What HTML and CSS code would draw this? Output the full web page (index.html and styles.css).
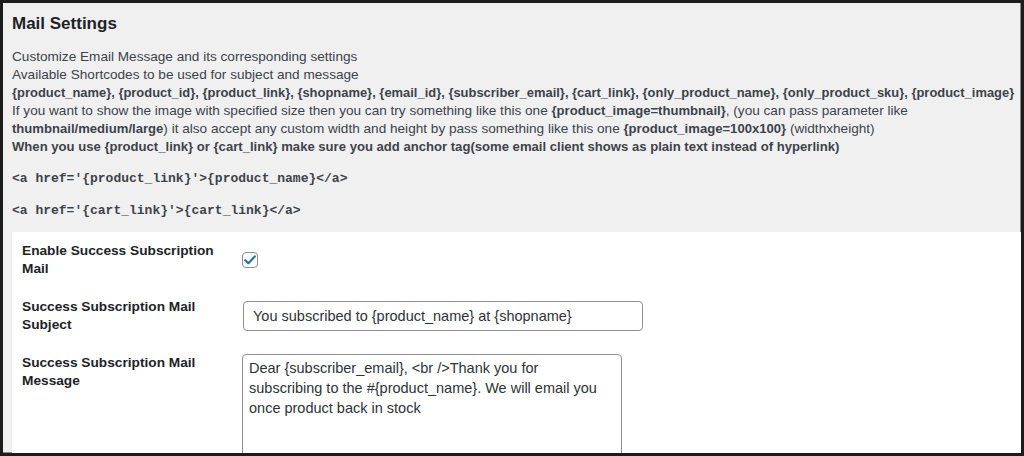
FILE: index.html
```html
<!DOCTYPE html>
<html>
<head>
<meta charset="utf-8">
<title>Mail Settings</title>
<link rel="stylesheet" href="styles.css">
</head>
<body>
<div class="frame">
  <h2 class="title">Mail Settings</h2>
  <p class="desc">
    Customize Email Message and its corresponding settings<br>
    Available Shortcodes to be used for subject and message<br>
    <span class="nowrap"><strong class="codes">{product_name}, {product_id}, {product_link}, {shopname}, {email_id}, {subscriber_email}, {cart_link}, {only_product_name}, {only_product_sku}, {product_image}</strong></span><br>
    If you want to show the image with specified size then you can try something like this one <strong>{product_image=thumbnail}</strong>, (you can pass parameter like<br>
    <strong>thumbnail/medium/large</strong>) it also accept any custom width and height by pass something like this one <strong>{product_image=100x100}</strong> (widthxheight)<br>
    <strong>When you use {product_link} or {cart_link} make sure you add anchor tag(some email client shows as plain text instead of hyperlink)</strong>
  </p>
  <p class="code"><code>&lt;a href='{product_link}'&gt;{product_name}&lt;/a&gt;</code></p>
  <p class="code"><code>&lt;a href='{cart_link}'&gt;{cart_link}&lt;/a&gt;</code></p>

  <div class="panel">
    <div class="row row-center">
      <div class="label">Enable Success Subscription Mail</div>
      <div class="field">
        <span class="check">
          <svg width="12" height="10" viewBox="0 0 12 10"><path d="M1.2 5.2 L4.4 8.2 L10.8 1.4" fill="none" stroke="#2271b1" stroke-width="2.2" stroke-linecap="round" stroke-linejoin="round"/></svg>
        </span>
      </div>
    </div>
    <div class="row row-center">
      <div class="label">Success Subscription Mail Subject</div>
      <div class="field">
        <input class="text-input" type="text" value="You subscribed to {product_name} at {shopname}">
      </div>
    </div>
    <div class="row">
      <div class="label">Success Subscription Mail Message</div>
      <div class="field">
        <textarea class="text-area" rows="6">Dear {subscriber_email}, &lt;br /&gt;Thank you for subscribing to the #{product_name}. We will email you once product back in stock</textarea>
      </div>
    </div>
  </div>
</div>
</body>
</html>
```

FILE: styles.css
```css
html, body {
  margin: 0;
  padding: 0;
  background: #1c1c1c;
}

.frame {
  box-sizing: border-box;
  width: 1024px;
  height: 456px;
  overflow: hidden;
  border: 3px solid #1c1c1c;
  box-shadow: inset -1px -1px 0 #8a8a8a;
  background: #f0f0f1;
  padding: 10px 0 0 9px;
  font-family: "Liberation Sans", Arial, sans-serif;
  color: #3c434a;
  font-size: 13.6px;
  line-height: 18px;
}

.title {
  margin: 0;
  font-size: 17px;
  line-height: 22px;
  font-weight: 700;
  color: #1d2327;
}

.desc {
  margin: 13px 0 0 0;
}

.desc strong {
  font-weight: 700;
  font-size: 13.1px;
}

.desc .codes {
  font-size: 12.95px;
}

.nowrap {
  white-space: nowrap;
}

.code {
  margin: 13px 0 0 0;
  line-height: 18px;
}

.code code {
  font-family: "Liberation Mono", "Courier New", monospace;
  font-size: 13px;
  font-weight: 700;
  color: #3c434a;
}

.panel {
  margin-top: 12px;
  background: #ffffff;
  padding: 10px 10px 40px 10px;
  display: flex;
  flex-direction: column;
  gap: 20px;
}

.row {
  display: grid;
  grid-template-columns: 200px 1fr;
  column-gap: 20px;
  align-items: start;
}

.row-center {
  align-items: center;
}

.label {
  font-weight: 700;
  color: #1d2327;
  font-size: 13.7px;
  line-height: 18px;
}

.field {
  display: flex;
}

.check {
  box-sizing: border-box;
  width: 16px;
  height: 16px;
  border: 1px solid #8c8f94;
  border-radius: 4px;
  background: #fff;
  display: flex;
  align-items: center;
  justify-content: center;
}

.text-input {
  box-sizing: border-box;
  width: 400px;
  height: 30px;
  border: 1px solid #8c8f94;
  border-radius: 4px;
  padding: 0 9px;
  font-family: "Liberation Sans", Arial, sans-serif;
  font-size: 14.5px;
  color: #2c3338;
  background: #fff;
  margin: 0 0 0 1px;
}

.text-area {
  box-sizing: border-box;
  width: 380px;
  height: 130px;
  border: 1px solid #8c8f94;
  border-radius: 4px;
  padding: 3px 10px 3px 6px;
  font-family: "Liberation Sans", Arial, sans-serif;
  font-size: 14.5px;
  line-height: 20px;
  color: #2c3338;
  background: #fff;
  resize: none;
  margin: 0;
}
```
